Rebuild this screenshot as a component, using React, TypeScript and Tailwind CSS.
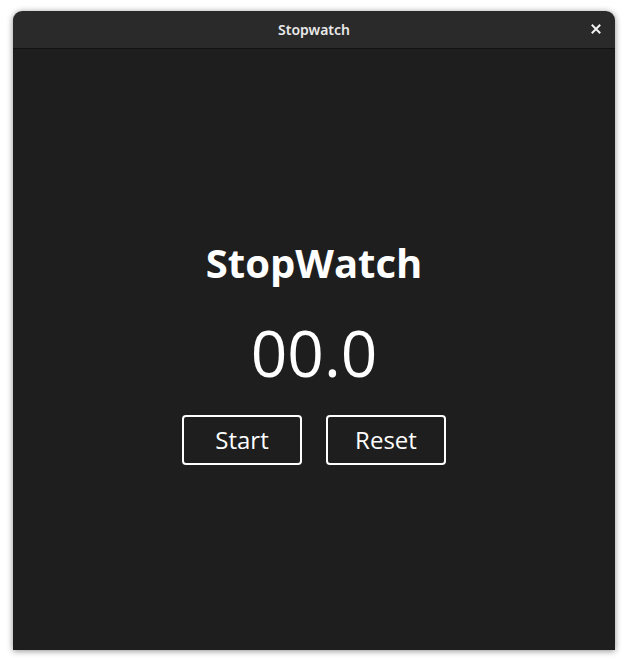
export default function App() {
    return (
        <div className="w-[628px] h-[666px] bg-white pt-[11px] px-[13px] pb-[16px]" style={{ fontFamily: "'Open Sans', sans-serif" }}>
            <div className="h-full flex flex-col rounded-t-[9px] overflow-hidden shadow-[0_1px_6px_rgba(0,0,0,0.45)]">
                <div className="h-[38px] shrink-0 relative flex items-center justify-center bg-[#2a2a2a] border-b border-[#121212]">
                    <span className="text-[14px] font-semibold text-[#e8e8e8]" style={{ fontFamily: "'Noto Sans', sans-serif" }}>Stopwatch</span>
                    <button className="absolute right-[12px] top-[11px] w-[14px] h-[14px] flex items-center justify-center text-white">
                        <svg width="10" height="10" viewBox="0 0 10 10">
                            <path d="M1.5 1.5 L8.5 8.5 M8.5 1.5 L1.5 8.5" stroke="#f2f2f2" strokeWidth="2" strokeLinecap="square" />
                        </svg>
                    </button>
                </div>
                <div className="flex-1 bg-[#1e1e1e] flex flex-col items-center justify-center text-white pt-[8px]">
                    <h1 className="text-[40px] font-bold leading-none">StopWatch</h1>
                    <div className="text-[64px] leading-none mt-[38px]">00.0</div>
                    <div className="flex gap-[24px] mt-[30px]">
                        <button className="w-[120px] h-[50px] border-2 border-white rounded-[4px] text-[24px]">Start</button>
                        <button className="w-[120px] h-[50px] border-2 border-white rounded-[4px] text-[24px]">Reset</button>
                    </div>
                </div>
            </div>
        </div>
    );
}
